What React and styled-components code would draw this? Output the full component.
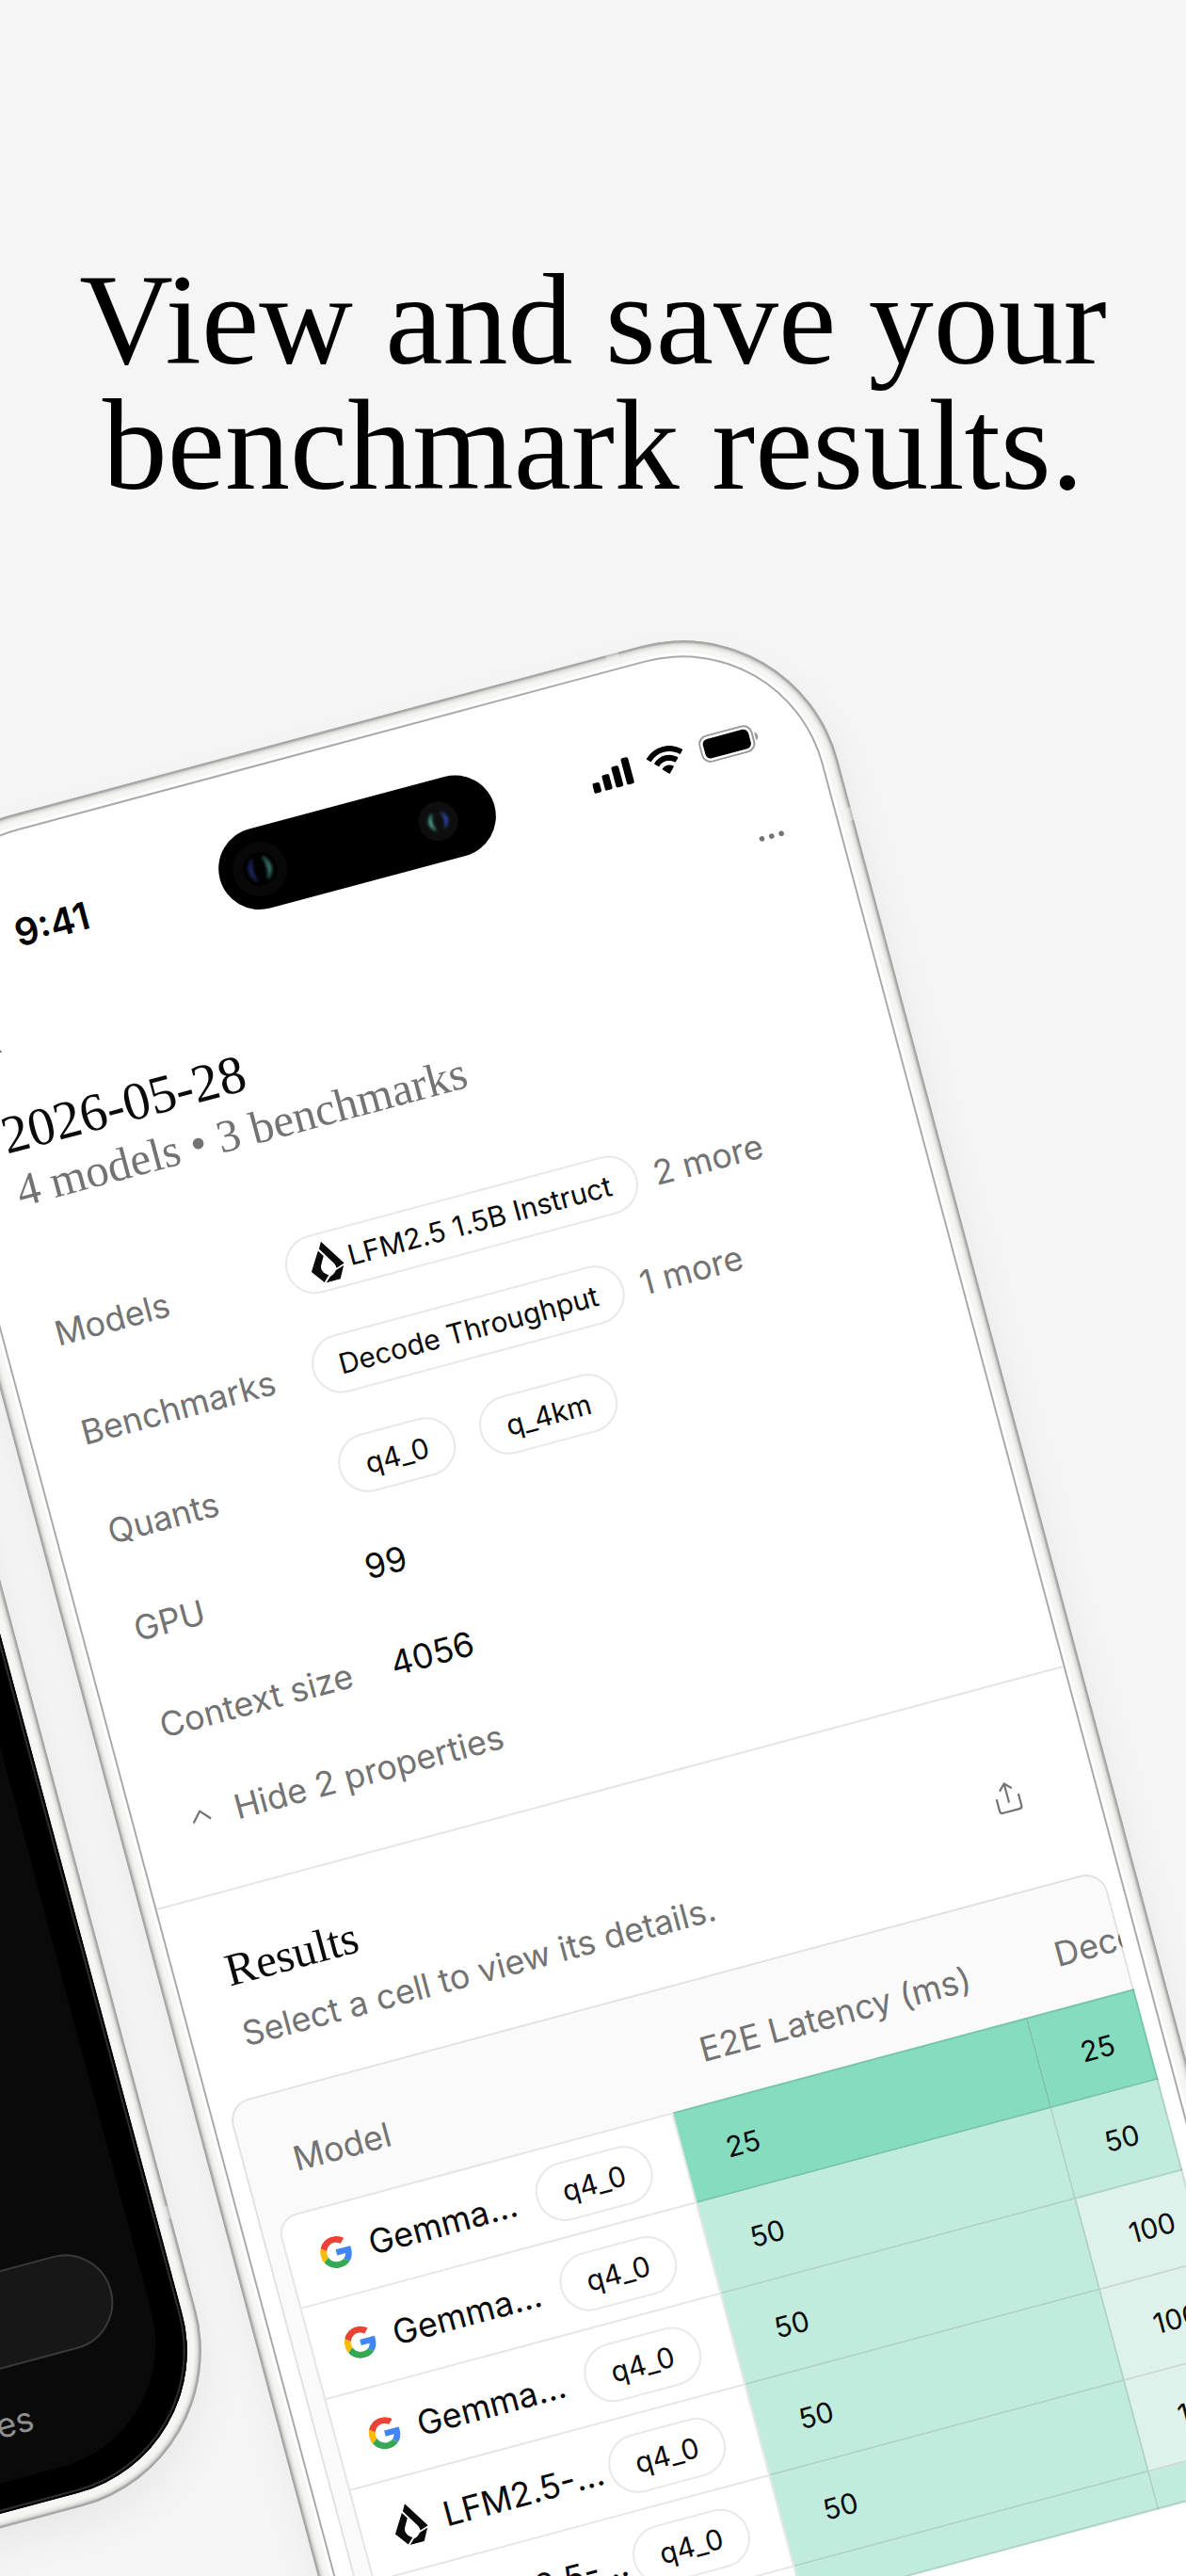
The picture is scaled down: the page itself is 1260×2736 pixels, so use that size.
import React from "react";
import styled, { createGlobalStyle, css } from "styled-components";

const sans = `Inter, "Liberation Sans", sans-serif`;
const serif = `"Liberation Serif", serif`;
const ink = "#0a0a0a";
const muted = "#737373";
const line = "rgba(0, 0, 0, 0.1)";

const GlobalStyle = createGlobalStyle`
  * { box-sizing: border-box; }
  body { margin: 0; background: #f5f5f5; }
  h1, h2, h3, p, dl, dd { margin: 0; font-weight: 400; }
`;

const Page = styled.main`
  position: relative;
  height: 100vh;
  overflow: hidden;
  background: #f5f5f5;
  color: ${ink};
  font-family: ${sans};
`;

const Headline = styled.h1`
  padding: 273px 40px 0;
  color: #000;
  font: 400 138px/133px ${serif};
  text-align: center;
`;

const Tilt = styled.div`
  position: absolute;
  top: 0;
  left: 50%;
  display: flex;
  align-items: flex-start;
  gap: 52px;
  width: max-content;
  margin-left: -630px;
  transform: rotate(-15deg) translate(-1467px, 433px);
  transform-origin: 0 0;
`;

const Phone = styled.section`
  position: relative;
  flex: none;
  width: 1033px;
  height: 2161px;
  margin-top: ${(p) => p.$drop || 0}px;
  padding: ${(p) => p.$rim}px;
  border-radius: 171px;
  background: #f6f6f5;
  box-shadow:
    inset 0 0 0 2px #a6a6a6,
    inset 0 0 0 3px #bcbcba,
    inset 0 0 4px 5px #d4d4d1,
    0 20px 44px rgba(0, 0, 0, 0.05);
`;

const Antenna = styled.span`
  position: absolute;
  width: 14px;
  height: 14px;
  background: rgba(246, 246, 245, 0.4);
  ${(p) => (p.$edge === "top" ? css`top: 0; right: 196px;` : css`right: 0;`)}
  ${(p) => p.$edge === "right" && css`top: 223px;`}
  ${(p) => p.$edge === "low" && css`bottom: 271px;`}
`;

const LightScreen = styled.div`
  position: relative;
  display: flex;
  flex-direction: column;
  height: 100%;
  overflow: hidden;
  border-radius: 153px;
  background: #fff;
  box-shadow: 0 0 0 2px #aaa, 0 0 0 5px #fff;
`;

const StatusBar = styled.header`
  display: grid;
  grid-template-columns: 1fr 302px 1fr;
  align-items: center;
  padding: 62px 57px 0;
`;

const Clock = styled.time`
  padding-left: 66px;
  font-size: 40px;
  font-weight: 600;
  line-height: 48px;
  color: #000;
`;

const Island = styled.div`
  display: flex;
  align-items: center;
  justify-content: space-between;
  height: 87px;
  padding: 0 41px 0 15px;
  border-radius: 44px;
  background: #000;
`;

const StatusIcons = styled.div`
  display: flex;
  justify-content: flex-end;
  align-items: center;
  gap: 17px;
`;

const NavBar = styled.nav`
  display: flex;
  justify-content: space-between;
  align-items: center;
  height: 48px;
  margin-top: 40px;
  padding: 0 53px;
`;

const IconButton = styled.button`
  display: flex;
  padding: ${(p) => p.$top || 0}px 0 0;
  border: 0;
  background: none;
  color: ${muted};
`;

const Summary = styled.section`
  padding: 42px 54px 52px;
  border-bottom: 2px solid #e5e5e5;
`;

const RunTitle = styled.h2`
  font: 400 57px/62px ${serif};
`;

const RunMeta = styled.p`
  color: ${muted};
  font: 400 49px/60px ${serif};
`;

const Properties = styled.dl`
  display: flex;
  flex-direction: column;
  gap: 46px;
  margin-top: 94px;
  font-size: 36px;
`;

const Property = styled.div`
  display: grid;
  grid-template-columns: 254px 1fr;
  align-items: center;
  min-height: 60px;
`;

const Term = styled.dt`
  color: ${muted};
`;

const Value = styled.dd`
  display: flex;
  align-items: center;
  gap: ${(p) => p.$gap || 18}px;
`;

const Chip = styled.span`
  display: inline-flex;
  flex: none;
  align-items: center;
  gap: 6px;
  height: 63px;
  padding: 0 27px 0 ${(p) => (p.$withIcon ? 24 : 27)}px;
  border: 2px solid #e8e8e8;
  border-radius: 32px;
  background: #fff;
  color: ${ink};
  font-size: 30px;
`;

const More = styled.span`
  color: ${muted};
`;

const Toggle = styled.button`
  display: flex;
  align-items: center;
  gap: 22px;
  height: 60px;
  margin-top: 44px;
  padding: 0;
  border: 0;
  background: none;
  color: ${muted};
  font: 400 36px/44px ${sans};
`;

const ResultsHead = styled.header`
  display: flex;
  align-items: center;
  justify-content: space-between;
  padding: 52px 73px 0 54px;
`;

const ResultsTitle = styled.h3`
  font: 400 49px/60px ${serif};
`;

const Hint = styled.p`
  margin-top: 17px;
  color: ${muted};
  font-size: 36px;
  line-height: 44px;
`;

const TableFrame = styled.div`
  position: relative;
  height: 672px;
  margin: 45px 16px 0 18px;
  padding-left: 19px;
  overflow: hidden;
  border-radius: 24px 24px 0 0;
  background: #fafafa;

  &::after {
    content: "";
    position: absolute;
    inset: 0;
    border: 2px solid ${line};
    border-radius: inherit;
    pointer-events: none;
  }
`;

const ResultsTable = styled.table`
  width: 1247px;
  table-layout: fixed;
  border-collapse: separate;
  border-spacing: 0;
`;

const HeadCell = styled.th`
  width: ${(p) => p.$width}px;
  height: 131px;
  padding: 18px 0 0 ${(p) => p.$indent}px;
  color: ${muted};
  font-size: 36px;
  font-weight: 400;
  text-align: left;
  white-space: nowrap;
`;

const ModelCell = styled.th`
  height: 100px;
  padding: 2px 35px 0 34px;
  border: solid #e5e5e5;
  border-width: ${(p) => (p.$first ? 2 : 0)}px 2px 2px;
  border-top-left-radius: ${(p) => (p.$first ? 22 : 0)}px;
  background: #fff;
  font-size: 36px;
  font-weight: 400;
`;

const ModelLine = styled.div`
  display: flex;
  align-items: center;
  gap: 19px;
`;

const ModelName = styled.span`
  flex: 1;
  width: 0;
  text-align: left;
  white-space: nowrap;
`;

const heat = { 25: "#86dcbf", 50: "#c1ebdd", 100: "#def2eb" };

const ScoreCell = styled.td`
  padding: 2px 0 0 45px;
  border: solid ${line};
  border-width: ${(p) => (p.$first ? 2 : 0)}px 2px 2px 0;
  background: ${(p) => heat[p.$score]};
  font-size: 30px;
`;

const DarkBezel = styled.div`
  position: relative;
  display: flex;
  height: 100%;
  padding: 31px;
  border-radius: 156px;
  background: #000;
  box-shadow: inset 0 0 0 2px #000, inset 0 0 0 4px #2e2e2e;
`;

const DarkScreen = styled.div`
  display: flex;
  flex: 1;
  flex-direction: column;
  justify-content: flex-end;
  padding: 0 35px 33px;
  border-radius: 136px;
  background: #0a0a0a;
`;

const DarkField = styled.div`
  height: 102px;
  border: 2px solid #3a3a3a;
  border-radius: 51px;
  background: #171717;
`;

const DarkCaption = styled.p`
  margin-top: 32px;
  padding-right: 116px;
  color: #8f8f8f;
  font-size: 36px;
  line-height: 52px;
  text-align: right;
`;

function Lens({ size, glow }) {
  const r = size / 2;
  return (
    <svg width={size} height={size} viewBox={`${-r} ${-r} ${size} ${size}`} aria-hidden="true">
      <defs>
        <filter id={`soft${size}`} x="-100%" y="-50%" width="300%" height="200%">
          <feGaussianBlur stdDeviation="1.6" />
        </filter>
      </defs>
      <circle r={r} fill={glow ? "#0e0e0e" : "#080808"} />
      {!glow && <circle r="18" fill="#010101" />}
      <g filter={`url(#soft${size})`}>
        {glow ? (
          <>
            <path d="M-5-9Q-15 0-5 9Q-9 0-5-9Z" fill="#5cb5a2" stroke="#3f8577" strokeWidth="1.5" />
            <path d="M5-9Q15 0 5 9Q9 0 5-9Z" fill="#3350b8" stroke="#263a86" strokeWidth="1.5" />
          </>
        ) : (
          <>
            <path d="M-6-12Q-18 0-6 12Q-10 0-6-12Z" fill="#1c2a60" stroke="#161f48" strokeWidth="2" />
            <path d="M6-12Q18 0 6 12Q10 0 6-12Z" fill="#3a7a6d" stroke="#28564d" strokeWidth="2" />
          </>
        )}
      </g>
    </svg>
  );
}

const Signal = () => (
  <svg width="45" height="30" viewBox="0 0 45 30" aria-hidden="true">
    <rect x="0" y="19" width="8" height="11" rx="2" />
    <rect x="12" y="13" width="8" height="17" rx="2" />
    <rect x="24" y="7" width="8" height="23" rx="2" />
    <rect x="36" y="1" width="8" height="29" rx="2" />
  </svg>
);

const Wifi = () => (
  <svg width="41" height="30" viewBox="0 0 17 12.4" aria-hidden="true">
    <path d="M8.5 2.5c2.4 0 4.7.9 6.4 2.6.1.1.3.1.5 0l1.2-1.3c.1-.1.1-.4 0-.5a11.7 11.7 0 0 0-16.2 0c-.1.1-.1.4 0 .5l1.2 1.3c.1.1.3.1.5 0A9.3 9.3 0 0 1 8.5 2.5Zm0 4.1c1.3 0 2.6.5 3.5 1.4.2.1.4.1.5 0l1.3-1.3c.1-.2.1-.4 0-.5a7.6 7.6 0 0 0-10.6 0c-.1.1-.1.3 0 .5L4.5 8c.1.1.3.1.5 0 .9-.9 2.2-1.4 3.5-1.4Zm2.5 2.8c.1.1.1.3 0 .5l-2.2 2.3c-.2.2-.4.2-.6 0L6 9.9c-.1-.2-.1-.4 0-.5a3.9 3.9 0 0 1 5 0Z" />
  </svg>
);

const Battery = () => (
  <svg width="64" height="30" viewBox="0 0 64 30" aria-hidden="true">
    <rect x="1" y="1" width="57" height="28" rx="9" fill="none" stroke="#000" strokeOpacity=".4" strokeWidth="2" />
    <path d="M60.5 10.5c2 .8 3 2.5 3 4.5s-1 3.7-3 4.5Z" fillOpacity=".4" />
    <rect x="4.5" y="4.5" width="50" height="21" rx="5.5" />
  </svg>
);

const Back = () => (
  <svg width="36" height="36" viewBox="0 0 24 24" fill="none" stroke="currentColor" strokeWidth="1.5" strokeLinecap="round" strokeLinejoin="round" aria-hidden="true">
    <path d="m15 18-6-6 6-6" />
  </svg>
);

const Dots = () => (
  <svg width="36" height="36" viewBox="0 0 36 36" fill="currentColor" aria-hidden="true">
    <circle cx="7.3" cy="18" r="2.8" />
    <circle cx="18" cy="18" r="2.8" />
    <circle cx="28.7" cy="18" r="2.8" />
  </svg>
);

const ChevronUp = () => (
  <svg width="32" height="32" viewBox="0 0 32 32" fill="none" stroke="currentColor" strokeWidth="2.2" strokeLinecap="round" strokeLinejoin="round" aria-hidden="true">
    <path d="m8 20 9-10 9 10" />
  </svg>
);

const Share = () => (
  <svg width="40" height="40" viewBox="0 0 40 40" fill="none" stroke="currentColor" strokeWidth="2.2" strokeLinecap="round" strokeLinejoin="round" aria-hidden="true">
    <path d="M8 20v12q0 3 3 3h18q3 0 3-3V20M20 25V5M14 11l6-6 6 6" />
  </svg>
);

const Google = () => (
  <svg width="34" height="34" viewBox="0 0 48 48" aria-hidden="true">
    <path fill="#EA4335" d="M24 9.5c3.54 0 6.71 1.22 9.21 3.6l6.85-6.85C35.9 2.38 30.47 0 24 0 14.62 0 6.51 5.38 2.56 13.22l7.98 6.19C12.43 13.72 17.74 9.5 24 9.5z" />
    <path fill="#4285F4" d="M46.98 24.55c0-1.57-.15-3.09-.38-4.55H24v9.02h12.94c-.58 2.96-2.26 5.48-4.78 7.18l7.73 6c4.51-4.18 7.09-10.36 7.09-17.65z" />
    <path fill="#FBBC05" d="M10.53 28.59c-.48-1.45-.76-2.99-.76-4.59s.27-3.14.76-4.59l-7.98-6.19C.92 16.46 0 20.12 0 24c0 3.88.92 7.54 2.56 10.78l7.97-6.19z" />
    <path fill="#34A853" d="M24 48c6.48 0 11.93-2.13 15.89-5.81l-7.73-6c-2.15 1.45-4.92 2.3-8.16 2.3-6.26 0-11.57-4.22-13.47-9.91l-7.98 6.19C6.51 42.62 14.62 48 24 48z" />
  </svg>
);

const Liquid = () => (
  <svg width="36" height="44" viewBox="0 0 36 44" fill={ink} aria-hidden="true">
    <path d="M18 0 36 28.5 26.8 31.5 26.5 28.5Q26 26.5 24 23.5L14 7Z" />
    <path d="M12.5 8.6 16.8 15.5 11.6 24.6C9.8 28.5 11.5 33.5 16.9 36.5L10.5 42.8 0 28.5Z" />
    <path d="M34.8 30.8 27.8 43.7H12.3L18 38.3Q22.5 37.6 25.6 33.4Z" />
  </svg>
);

const runs = [
  { icon: Google, name: "Gemma…", quant: "q4_0", scores: [25, 25] },
  { icon: Google, name: "Gemma…", quant: "q4_0", scores: [50, 50] },
  { icon: Google, name: "Gemma…", quant: "q4_0", scores: [50, 100] },
  { icon: Liquid, name: "LFM2.5-…", quant: "q4_0", scores: [50, 100] },
  { icon: Liquid, name: "LFM2.5-…", quant: "q4_0", scores: [50, 100] },
  { icon: null, name: "", quant: "", scores: [50, 50] },
];

export default function App() {
  return (
    <Page>
      <GlobalStyle />
      <Headline>
        View and save your
        <br />
        benchmark results.
      </Headline>
      <Tilt>
        <Phone $rim={15}>
          <Antenna $edge="low" />
          <DarkBezel>
            <DarkScreen>
              <DarkField />
              <DarkCaption>es</DarkCaption>
            </DarkScreen>
          </DarkBezel>
        </Phone>

        <Phone $rim={18} $drop={406}>
          <Antenna $edge="top" />
          <Antenna $edge="right" />
          <LightScreen>
            <StatusBar>
              <Clock>9:41</Clock>
              <Island>
                <Lens size={58} />
                <Lens size={42} glow />
              </Island>
              <StatusIcons>
                <Signal />
                <Wifi />
                <Battery />
              </StatusIcons>
            </StatusBar>
            <NavBar>
              <IconButton aria-label="Back"><Back /></IconButton>
              <IconButton aria-label="More options"><Dots /></IconButton>
            </NavBar>

            <Summary>
              <RunTitle>2026-05-28</RunTitle>
              <RunMeta>4 models • 3 benchmarks</RunMeta>
              <Properties>
                <Property>
                  <Term>Models</Term>
                  <Value>
                    <Chip $withIcon><Liquid />LFM2.5 1.5B Instruct</Chip>
                    <More>2 more</More>
                  </Value>
                </Property>
                <Property>
                  <Term>Benchmarks</Term>
                  <Value>
                    <Chip>Decode Throughput</Chip>
                    <More>1 more</More>
                  </Value>
                </Property>
                <Property>
                  <Term>Quants</Term>
                  <Value $gap={28}>
                    <Chip>q4_0</Chip>
                    <Chip>q_4km</Chip>
                  </Value>
                </Property>
                <Property>
                  <Term>GPU</Term>
                  <Value>99</Value>
                </Property>
                <Property>
                  <Term>Context size</Term>
                  <Value>4056</Value>
                </Property>
              </Properties>
              <Toggle aria-expanded="true"><ChevronUp />Hide 2 properties</Toggle>
            </Summary>

            <ResultsHead>
              <div>
                <ResultsTitle>Results</ResultsTitle>
                <Hint>Select a cell to view its details.</Hint>
              </div>
              <IconButton $top={10} aria-label="Share results"><Share /></IconButton>
            </ResultsHead>
            <TableFrame>
              <ResultsTable>
                <thead>
                  <tr>
                    <HeadCell $width={437} $indent={35}>Model</HeadCell>
                    <HeadCell $width={390} $indent={45}>E2E Latency (ms)</HeadCell>
                    <HeadCell $width={420} $indent={45}>Deco</HeadCell>
                  </tr>
                </thead>
                <tbody>
                  {runs.map((run, i) => (
                    <tr key={i}>
                      <ModelCell scope="row" $first={i === 0}>
                        {run.icon && (
                          <ModelLine>
                            <run.icon />
                            <ModelName>{run.name}</ModelName>
                            <Chip>{run.quant}</Chip>
                          </ModelLine>
                        )}
                      </ModelCell>
                      {run.scores.map((score, j) => (
                        <ScoreCell key={j} $score={score} $first={i === 0}>{score}</ScoreCell>
                      ))}
                    </tr>
                  ))}
                </tbody>
              </ResultsTable>
            </TableFrame>
          </LightScreen>
        </Phone>
      </Tilt>
    </Page>
  );
}
